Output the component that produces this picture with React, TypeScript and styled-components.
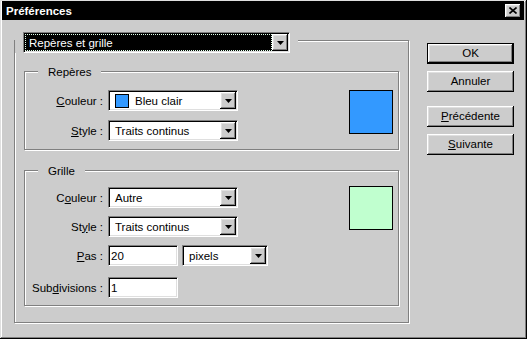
import styled, { createGlobalStyle } from 'styled-components'

const GlobalStyle = createGlobalStyle`
  html, body {
    margin: 0;
    padding: 0;
    background: #cccccc;
  }
  body {
    font-family: "Liberation Sans", Arial, sans-serif;
    font-size: 11.5px;
    color: #000;
  }
  u {
    text-underline-offset: 1px;
  }
`

const raised = `
  box-shadow: inset -1px -1px 0 #000, inset 1px 1px 0 #fff,
    inset -2px -2px 0 #808080, inset 2px 2px 0 #dfdfdf;
`

const etched = `
  border: 1px solid #808080;
  box-shadow: inset 1px 1px 0 #fff, 1px 1px 0 #fff;
`

function Arrow() {
	return <svg width="7" height="4" viewBox="0 0 7 4">
		<polygon points="0,0 7,0 3.5,4" fill="#000" />
	</svg>
}

function CloseGlyph() {
	return <svg width="8" height="7" viewBox="0 0 8 7">
		<path d="M0.5 0.5 L7.5 6.5 M7.5 0.5 L0.5 6.5" stroke="#000" strokeWidth="1.6" fill="none" />
	</svg>
}

type ComboProps = {
	width: number
	value: string
	swatch?: string
	active?: boolean
}

function ComboBox({width, value, swatch, active}: ComboProps) {
	return <Combo $width={width}>
		<Field $active={active}>
			{swatch && <ItemSwatch $color={swatch} />}
			{value}
		</Field>
		<ArrowButton><Arrow /></ArrowButton>
	</Combo>
}

export default function App() {
	return <>
		<GlobalStyle />
		<Window>
			<TitleBar>
				<Title>Préférences</Title>
				<CloseButton><CloseGlyph /></CloseButton>
			</TitleBar>
			<Body>
				<MainFrame>
					<PageLegend>
						<ComboBox width={267} value="Repères et grille" active />
					</PageLegend>

					<Group $top={18} $bottom={8}>
						<GroupLegend>Repères</GroupLegend>
						<FormGrid $gap={9}>
							<Label><u>C</u>ouleur :</Label>
							<ComboBox width={130} value="Bleu clair" swatch="#3399ff" />
							<Label><u>S</u>tyle :</Label>
							<ComboBox width={130} value="Traits continus" />
						</FormGrid>
						<Swatch $color="#3399ff" />
					</Group>

					<Group $top={16} $bottom={7}>
						<GroupLegend>Grille</GroupLegend>
						<FormGrid $gap={8}>
							<Label>C<u>o</u>uleur :</Label>
							<ComboBox width={130} value="Autre" />
							<Label>St<u>y</u>le :</Label>
							<ComboBox width={130} value="Traits continus" />
							<Label><u>P</u>as :</Label>
							<InlineControls>
								<TextBox>20</TextBox>
								<ComboBox width={86} value="pixels" />
							</InlineControls>
							<Label $extra={3}>Sub<u>d</u>ivisions :</Label>
							<TextBox $extra={3}>1</TextBox>
						</FormGrid>
						<Swatch $color="#c0ffcf" $lift={1} />
					</Group>
				</MainFrame>

				<ButtonColumn>
					<Button $default>OK</Button>
					<Button $space={7}>Annuler</Button>
					<Button $space={14}><u>P</u>récédente</Button>
					<Button $space={7}><u>S</u>uivante</Button>
				</ButtonColumn>
			</Body>
		</Window>
	</>
}

const Window = styled.div`
	width: 527px;
	height: 339px;
	box-sizing: border-box;
	background: #cccccc;
	padding: 1px 3px 3px 2px;
	box-shadow: inset -1px -1px 0 #000, inset 1px 1px 0 #dfdfdf,
		inset -2px -2px 0 #808080, inset 2px 2px 0 #fff;
	display: flex;
	flex-direction: column;
`

const TitleBar = styled.div`
	height: 19px;
	background: #000;
	display: flex;
	align-items: center;
	justify-content: space-between;
	padding: 0 3px 0 4px;
`

const Title = styled.div`
	color: #fff;
	font-weight: 700;
	font-size: 11.5px;
`

const CloseButton = styled.div`
	width: 16px;
	height: 14px;
	box-sizing: border-box;
	background: #cccccc;
	${raised}
	display: flex;
	align-items: center;
	justify-content: center;
	padding: 0 1px 1px 0;
`

const Body = styled.div`
	display: flex;
	align-items: flex-start;
	padding-left: 12px;
`

const MainFrame = styled.div`
	position: relative;
	margin-top: 20px;
	width: 395px;
	height: 283px;
	box-sizing: border-box;
	${etched}
	padding: 30px 9px 16px 9px;
	display: flex;
	flex-direction: column;
	gap: 20px;
`

const PageLegend = styled.div`
	position: absolute;
	top: -9px;
	left: 0;
	padding: 0 8px;
	background: #cccccc;
`

const Group = styled.div<{$top: number; $bottom: number}>`
	position: relative;
	${etched}
	padding: ${p => p.$top}px 5px ${p => p.$bottom}px 0;
	display: flex;
	align-items: flex-start;
`

const GroupLegend = styled.div`
	position: absolute;
	top: -7px;
	left: 13px;
	padding: 0 10px;
	line-height: 14px;
	background: #cccccc;
`

const FormGrid = styled.div<{$gap: number}>`
	display: grid;
	grid-template-columns: 78px auto;
	column-gap: 5px;
	row-gap: ${p => p.$gap}px;
	align-items: center;
	justify-items: start;
`

const Label = styled.div<{$extra?: number}>`
	justify-self: end;
	white-space: nowrap;
	margin-top: ${p => p.$extra || 0}px;
`

const InlineControls = styled.div`
	display: flex;
	gap: 4px;
`

const Swatch = styled.div<{$color: string; $lift?: number}>`
	margin-left: auto;
	margin-top: ${p => -(p.$lift || 0)}px;
	width: 44px;
	height: 44px;
	box-sizing: border-box;
	border: 1px solid #000;
	background: ${p => p.$color};
`

const Combo = styled.div<{$width: number}>`
	display: flex;
	width: ${p => p.$width}px;
	height: 21px;
	box-sizing: border-box;
	border: 1px solid;
	border-color: #808080 #fff #fff #808080;
	box-shadow: inset 1px 1px 0 #000, inset -1px -1px 0 #dfdfdf;
	padding: 1px;
	background: #fff;
`

const Field = styled.div<{$active?: boolean}>`
	flex: 1;
	display: flex;
	align-items: center;
	padding-left: ${p => p.$active ? 4 : 5}px;
	white-space: nowrap;
	overflow: hidden;
	background: ${p => p.$active ? '#000' : '#fff'};
	color: ${p => p.$active ? '#fff' : '#000'};
	outline: ${p => p.$active ? '1px dotted #dfffe8' : 'none'};
	outline-offset: -1px;
`

const ItemSwatch = styled.span<{$color: string}>`
	width: 14px;
	height: 14px;
	box-sizing: border-box;
	border: 1px solid #000;
	background: ${p => p.$color};
	margin-right: 6px;
	flex-shrink: 0;
`

const ArrowButton = styled.div`
	width: 16px;
	flex-shrink: 0;
	background: #cccccc;
	${raised}
	display: flex;
	align-items: center;
	justify-content: center;
`

const TextBox = styled.div<{$extra?: number}>`
	width: 70px;
	height: 21px;
	box-sizing: border-box;
	border: 1px solid;
	border-color: #808080 #fff #fff #808080;
	box-shadow: inset 1px 1px 0 #000, inset -1px -1px 0 #dfdfdf;
	background: #fff;
	padding-left: 2px;
	display: flex;
	align-items: center;
	margin-top: ${p => p.$extra || 0}px;
`

const ButtonColumn = styled.div`
	display: flex;
	flex-direction: column;
	margin-left: 18px;
	margin-top: 23px;
`

const Button = styled.div<{$default?: boolean; $space?: number}>`
	width: 87px;
	height: 21px;
	box-sizing: border-box;
	margin-top: ${p => p.$space || 0}px;
	background: #cccccc;
	border: ${p => p.$default ? '1px solid #000' : 'none'};
	${raised}
	display: flex;
	align-items: center;
	justify-content: center;
	padding-bottom: 1px;
`
